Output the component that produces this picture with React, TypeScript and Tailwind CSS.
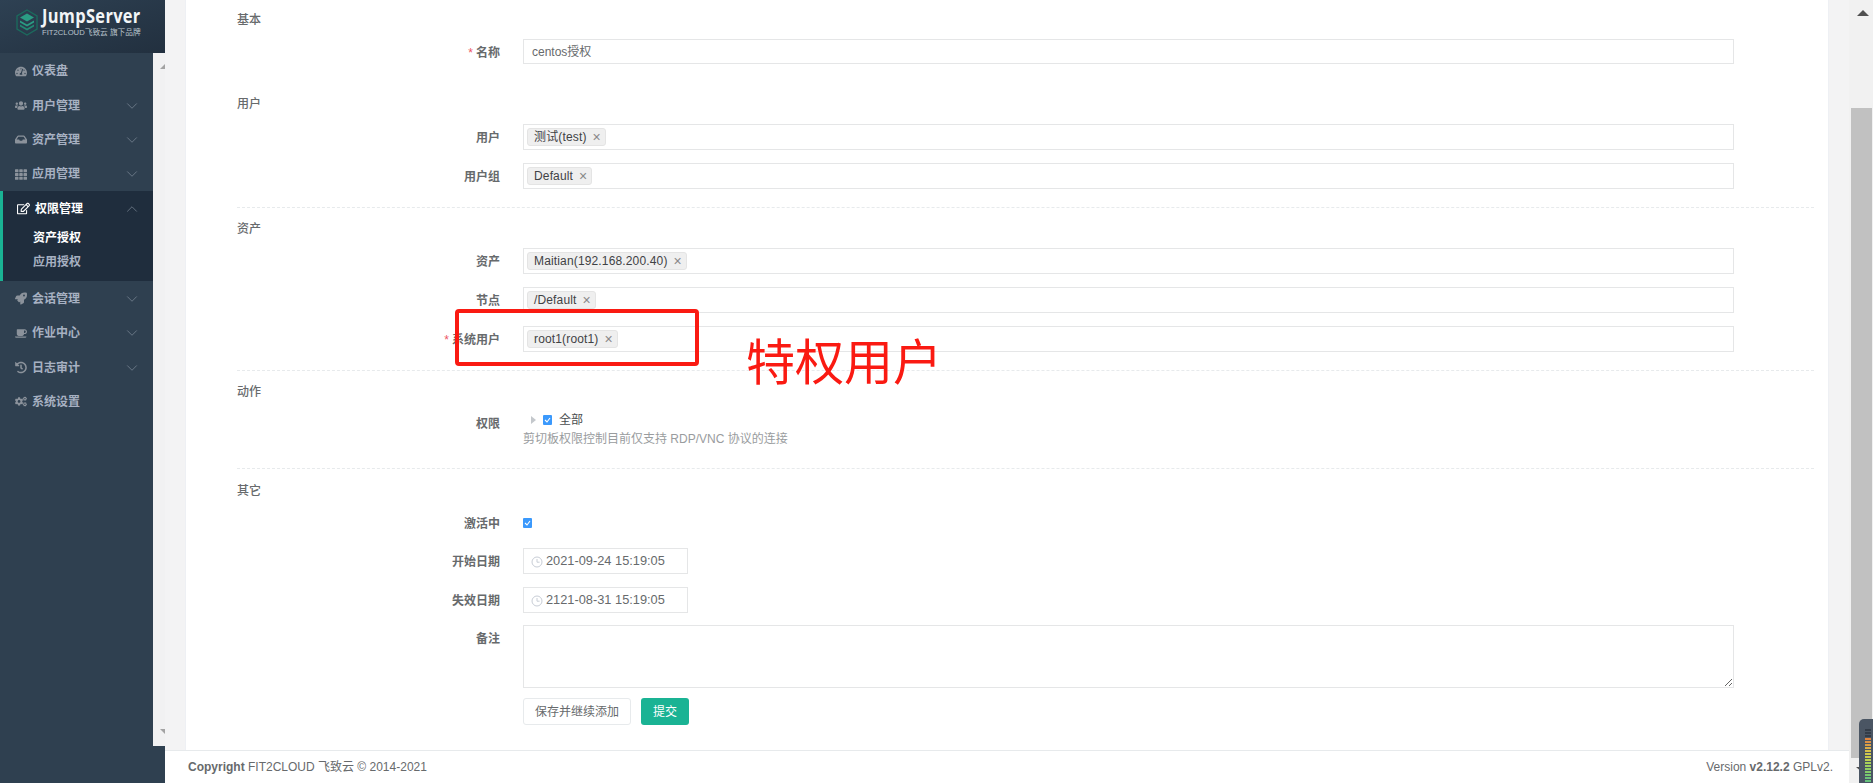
import { FC, ReactNode } from 'react';
import { ChevronDown, ChevronUp } from 'lucide-react';
import { FaCogs, FaCoffee, FaHistory, FaInbox, FaRegEdit, FaRocket, FaTachometerAlt, FaTh, FaUsers } from 'react-icons/fa';

const FONT = "font-['Liberation_Sans','Noto_Sans_CJK_SC',sans-serif]";

const Logo = () => (
      <div className="flex items-center h-[53px] pl-[16px] bg-gradient-to-br from-[#2e4153] to-[#22303f]">
            <svg width="22" height="27" viewBox="0 0 22 27" className="shrink-0 -mt-[8px]">
                  <path d="M11 1 21 7v13l-10 6L1 20V7z" fill="none" stroke="#1c6a5d" strokeWidth="1.4" />
                  <path d="M11 4.5 18 8.5 11 12.5 4 8.5z" fill="#2a9d84" />
                  <path d="M4 11.5 11 15.5 18 11.5V13.5L11 17.5 4 13.5z" fill="#2a9d84" />
                  <path d="M4 15.5 11 19.5 18 15.5V17.5L11 21.5 4 17.5z" fill="#238a74" />
            </svg>
            <div className="ml-[4px] -mt-[12px]">
                  <div className="text-[20px] leading-[24px] font-bold text-[#f2f5f7] tracking-[0.4px] font-['Open_Sans',sans-serif] scale-x-[0.82] origin-left">
                        JumpServer
                  </div>
                  <div className="text-[7.7px] leading-[9px] text-[#b9c3cc] whitespace-nowrap">FIT2CLOUD飞致云 旗下品牌</div>
            </div>
      </div>
);

const NavItem: FC<{ icon: ReactNode; label: string; chevron?: boolean }> = ({ icon, label, chevron }) => (
      <div className="flex items-center h-[34.4px] pl-[15px] pr-[12px] text-[#a7b1c2] font-bold text-[12px]">
            <span className="w-[12px] flex justify-center text-[#8b929b] text-[13px]">{icon}</span>
            <span className="ml-[5px] flex-1">{label}</span>
            {chevron && <ChevronDown size={18} strokeWidth={0.8} className="text-[#8f9aa8]" />}
      </div>
);

const Sidebar = () => (
      <aside className="w-[165px] shrink-0 flex flex-col bg-[#2f4050] h-full">
            <Logo />
            <div className="flex h-[693px]">
                  <nav className="w-[153px] pt-[1px] bg-[#2f4050]">
                        <NavItem icon={<FaTachometerAlt />} label="仪表盘" />
                        <NavItem icon={<FaUsers />} label="用户管理" chevron />
                        <NavItem icon={<FaInbox />} label="资产管理" chevron />
                        <NavItem icon={<FaTh />} label="应用管理" chevron />
                        <div className="h-[90px] -mt-[1px] mb-[1px] pt-[1px] bg-[#1f2d3d] border-l-[3px] border-[#1ab394] text-[12px] font-bold">
                              <div className="flex items-center h-[34px] pl-[14px] pr-[12px] text-white">
                                    <FaRegEdit className="text-[13px]" />
                                    <span className="ml-[5px] flex-1">权限管理</span>
                                    <ChevronUp size={18} strokeWidth={0.8} className="text-[#8f9aa8]" />
                              </div>
                              <div className="pl-[30px] text-white leading-[24px]">资产授权</div>
                              <div className="pl-[30px] text-[#a7b1c2] leading-[24px]">应用授权</div>
                        </div>
                        <NavItem icon={<FaRocket />} label="会话管理" chevron />
                        <NavItem icon={<FaCoffee />} label="作业中心" chevron />
                        <NavItem icon={<FaHistory />} label="日志审计" chevron />
                        <NavItem icon={<FaCogs />} label="系统设置" />
                  </nav>
                  <div className="w-[12px] bg-[#f1f1f2] flex flex-col justify-between items-end pt-[11px] pb-[12px]">
                        <div className="w-0 h-0 border-b-[5px] border-l-[5px] border-b-[#a3a3a3] border-l-transparent" />
                        <div className="w-0 h-0 border-t-[5px] border-l-[5px] border-t-[#a3a3a3] border-l-transparent" />
                  </div>
            </div>
      </aside>
);

const Heading: FC<{ className?: string; children: ReactNode }> = ({ className, children }) => (
      <div className={`h-[20px] leading-[22px] pl-[12px] text-[12px] font-medium text-[#676a6c] ${className ?? ''}`}>{children}</div>
);

const Row: FC<{ label: string; required?: boolean; className?: string; children: ReactNode; top?: boolean }> = ({
      label,
      required,
      className,
      children,
      top,
}) => (
      <div className={`flex ${top ? 'items-start' : 'items-center'} ${className ?? ''}`}>
            <label className={`w-[275px] shrink-0 text-right text-[12px] font-bold text-[#676a6c] ${top ? 'leading-[28px]' : 'mt-[2px]'}`}>
                  {required && <span className="text-[#ed5565] font-normal mr-[3px]">*</span>}
                  {label}
            </label>
            <div className="ml-[23px] w-[1211px]">{children}</div>
      </div>
);

const Tag: FC<{ children: ReactNode }> = ({ children }) => (
      <span className="inline-flex items-center h-[18px] pl-[6px] pr-[4px] bg-[#efefef] border border-[#e4e4e4] rounded-[3px] text-[12px] text-[#3f4245] tracking-[0.15px]">
            {children}
            <span className="ml-[6px] text-[#888] text-[14px] leading-none font-light">×</span>
      </span>
);

const TagInput: FC<{ label: string; value: string; required?: boolean; className?: string }> = ({ label, value, required, className }) => (
      <Row label={label} required={required} className={className}>
            <div className="h-[26px] border border-[#e5e6e7] flex items-center pl-[3px]">
                  <Tag>{value}</Tag>
            </div>
      </Row>
);

const Check = () => (
      <span className="w-[9px] h-[10px] rounded-[1px] bg-[#3b99fc] flex items-center justify-center shrink-0">
            <svg width="7" height="6" viewBox="0 0 7 6">
                  <path d="M1 3 3 5 6 1" fill="none" stroke="#fff" strokeWidth="1.1" />
            </svg>
      </span>
);

const DateInput: FC<{ value: string }> = ({ value }) => (
      <div className="w-[165px] h-[26px] border border-[#e5e6e7] flex items-center pl-[7px] text-[12.8px] text-[#676a6c]">
            <svg width="12" height="12" viewBox="0 0 12 12" className="mt-[1px]">
                  <circle cx="6" cy="6" r="5" fill="none" stroke="#c8cdd6" strokeWidth="1" />
                  <path d="M6 3v3.2h2.6" fill="none" stroke="#c8cdd6" strokeWidth="1" />
            </svg>
            <span className="ml-[3px]">{value}</span>
      </div>
);

const Dashed = ({ className }: { className?: string }) => <div className={`ml-[12px] border-t border-dashed border-[#e7eaec] ${className ?? ''}`} />;

const PermissionForm = () => (
      <form className="w-[1589px] ml-[39px] pt-[9px]">
            <Heading>基本</Heading>
            <Row label="名称" required className="mt-[10px]">
                  <div className="h-[25px] border border-[#e5e6e7] flex items-center pl-[8px] pt-[1px] text-[12px] text-[#676a6c]">centos授权</div>
            </Row>

            <Heading className="mt-[29px]">用户</Heading>
            <TagInput label="用户" value="测试(test)" className="mt-[11px]" />
            <TagInput label="用户组" value="Default" className="mt-[13px]" />
            <Dashed className="mt-[18px]" />

            <Heading className="mt-[10px]">资产</Heading>
            <TagInput label="资产" value="Maitian(192.168.200.40)" className="mt-[10px]" />
            <TagInput label="节点" value="/Default" className="mt-[13px]" />
            <TagInput label="系统用户" value="root1(root1)" required className="mt-[13px]" />
            <Dashed className="mt-[18px]" />

            <Heading className="mt-[10px]">动作</Heading>
            <Row label="权限" top className="mt-[9px]">
                  <div className="h-[20px] flex items-center pl-[8px]">
                        <span className="w-0 h-0 border-y-[4px] border-l-[5px] border-y-transparent border-l-[#c4c8cc]" />
                        <span className="ml-[7px]">
                              <Check />
                        </span>
                        <span className="ml-[7px] text-[12px] text-[#4a4d50]">全部</span>
                  </div>
                  <div className="h-[18px] leading-[18px] text-[12px] text-[#999c9e]">剪切板权限控制目前仅支持 RDP/VNC 协议的连接</div>
            </Row>
            <Dashed className="mt-[20px]" />

            <Heading className="mt-[11px]">其它</Heading>
            <Row label="激活中" className="mt-[13px] h-[20px]">
                  <Check />
            </Row>
            <Row label="开始日期" className="mt-[15px]">
                  <DateInput value="2021-09-24 15:19:05" />
            </Row>
            <Row label="失效日期" className="mt-[13px]">
                  <DateInput value="2121-08-31 15:19:05" />
            </Row>
            <Row label="备注" top className="mt-[12px]">
                  <textarea className="block w-full h-[63px] border border-[#e5e6e7] outline-none" readOnly />
            </Row>
            <Row label="" className="mt-[10px]">
                  <div className="flex gap-[10px]">
                        <button type="button" className="w-[108px] h-[27px] bg-white border border-[#e7eaec] rounded-[3px] text-[12px] text-[#676a6c]">
                              保存并继续添加
                        </button>
                        <button type="button" className="w-[48px] h-[27px] bg-[#1ab394] rounded-[3px] text-[12px] text-white">
                              提交
                        </button>
                  </div>
            </Row>
      </form>
);

const METER = [
      'bg-[#333c48]',
      'bg-[#333c48]',
      'bg-[#333c48]',
      'bg-[#e0853f]',
      'bg-[#dd9142]',
      'bg-[#da9e45]',
      'bg-[#d8ad48]',
      'bg-[#d4bf4a]',
      'bg-[#d0c84c]',
      'bg-[#c8cc4e]',
      'bg-[#bcd050]',
      'bg-[#a8d058]',
      'bg-[#9cd05e]',
      'bg-[#90ce62]',
      'bg-[#84cc68]',
      'bg-[#78c870]',
      'bg-[#6cc478]',
      'bg-[#66c27c]',
];

const Scrollbar = () => (
      <div className="w-[24px] shrink-0 bg-[#f1f1f1] relative pl-[2px]">
            <div className="pt-[10px] pl-[6px]">
                  <div className="w-0 h-0 border-x-[6px] border-b-[6px] border-x-transparent border-b-[#505050]" />
            </div>
            <div className="mt-[92px] h-[650px] w-[21px] bg-[#c1c1c1]" />
            <div className="mt-[9px] pl-[5px]">
                  <div className="w-0 h-0 border-x-[6px] border-t-[5px] border-x-transparent border-t-[#505050]" />
            </div>
      </div>
);

const App = () => {
      return (
            <div className={`relative flex w-[1873px] h-[783px] overflow-hidden bg-white ${FONT}`}>
                  <Sidebar />
                  <div className="flex-1 min-w-0 flex flex-col">
                        <main className="h-[750px] bg-[#f3f3f4] px-[20px]">
                              <div className="h-full bg-white border-l border-r border-[#eef0f4]">
                                    <PermissionForm />
                              </div>
                        </main>
                        <footer className="h-[33px] border-t border-[#e7eaec] bg-white flex items-center justify-between pl-[23px] pr-[16px] text-[12px] text-[#676a6c]">
                              <div>
                                    <strong>Copyright</strong> FIT2CLOUD 飞致云 © 2014-2021
                              </div>
                              <div>
                                    Version <strong>v2.12.2</strong> GPLv2.
                              </div>
                        </footer>
                  </div>
                  <Scrollbar />

                  {/* Annotation drawn over the screenshot */}
                  <div className="absolute left-[455px] top-[309px] w-[244px] h-[57px] border-[4px] border-[#fa1a12] rounded-[4px]" />
                  <div className="absolute left-[746px] top-[328px] text-[49px] leading-[62px] text-[#fa1a12] font-['Noto_Sans_CJK_SC',sans-serif] font-normal whitespace-nowrap">
                        特权用户
                  </div>

                  {/* Level meter widget at the window corner */}
                  <div className="absolute left-[1859px] top-[719px] w-[14px] h-[64px] bg-[#4a5563] rounded-tl-[5px] pt-[10px] pl-[6px] flex flex-col gap-[1px]">
                        {METER.map((c, i) => (
                              <div key={i} className={`w-[6px] h-[2px] ${c}`} />
                        ))}
                  </div>
            </div>
      );
};

export default App;
